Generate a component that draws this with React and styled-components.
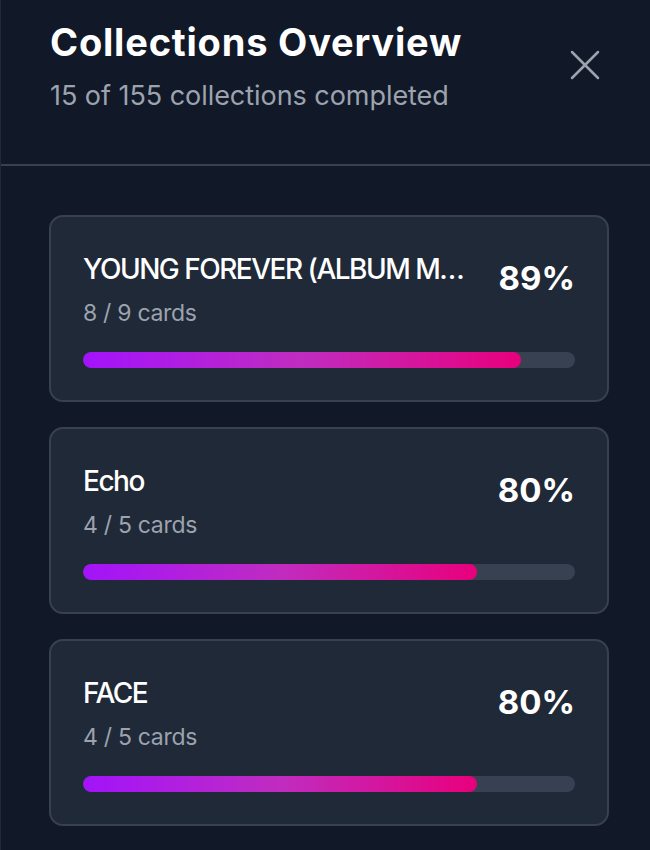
import React from 'react';
import styled, { createGlobalStyle } from 'styled-components';

const GlobalStyle = createGlobalStyle`
  html, body {
    margin: 0;
    padding: 0;
    background: #111827;
  }
  body {
    font-family: Inter, "Noto Sans", "Liberation Sans", sans-serif;
    -webkit-font-smoothing: antialiased;
  }
`;

const collections = [
  { name: 'YOUNG FOREVER (ALBUM MAKING PHOTOCARDS)', owned: 8, total: 9 },
  { name: 'Echo', owned: 4, total: 5 },
  { name: 'FACE', owned: 4, total: 5 },
];

// 패널 전체
const Panel = styled.div`
  width: 650px;
  height: 850px;
  background: #111827;
  border-left: 1px solid #1f2937;
  box-sizing: border-box;
  overflow: hidden;
`;

// 상단 헤더
const Header = styled.header`
  display: flex;
  justify-content: space-between;
  align-items: flex-start;
  padding: 18px 43px 0 49px;
  height: 166px;
  box-sizing: border-box;
  border-bottom: 2px solid #374151;
`;

const HeaderText = styled.div`
  display: flex;
  flex-direction: column;
`;

const Title = styled.h1`
  margin: 0;
  font-size: 38px;
  font-weight: 700;
  line-height: 48px;
  color: #ffffff;
  letter-spacing: 0.8px;
`;

const Subtitle = styled.p`
  margin: 10px 0 0;
  font-size: 27px;
  font-weight: 400;
  line-height: 40px;
  color: #9ca3af;
  letter-spacing: -0.05px;
`;

const CloseButton = styled.button`
  margin-top: 25px;
  width: 44px;
  height: 44px;
  padding: 0;
  border: none;
  background: transparent;
  display: flex;
  align-items: center;
  justify-content: center;
  color: #9ca3af;
  cursor: pointer;
`;

// 카드 목록
const List = styled.div`
  display: flex;
  flex-direction: column;
  gap: 25px;
  padding: 49px 41px 0 48px;
`;

const Card = styled.div`
  background: #1f2937;
  border: 2px solid #374151;
  border-radius: 14px;
  padding: 32px 32px 0 32px;
  height: 187px;
  box-sizing: border-box;
`;

const CardTop = styled.div`
  display: flex;
  justify-content: space-between;
  align-items: flex-start;
  gap: 20px;
`;

const CardText = styled.div`
  min-width: 0;
  flex: 1;
`;

const CardName = styled.div`
  font-size: 28px;
  font-weight: 500;
  line-height: 40px;
  color: #ffffff;
  white-space: nowrap;
  overflow: hidden;
  text-overflow: ellipsis;
  letter-spacing: -1.5px;
`;

const CardCount = styled.div`
  margin-top: 9px;
  font-size: 23px;
  line-height: 30px;
  color: #9ca3af;
  letter-spacing: -0.3px;
`;

const Percent = styled.div`
  font-size: 33px;
  font-weight: 700;
  line-height: 40px;
  margin-top: 9px;
  color: #ffffff;
  flex-shrink: 0;
`;

const Track = styled.div`
  margin-top: 24px;
  height: 16px;
  border-radius: 8px;
  background: #374151;
  overflow: hidden;
`;

const Fill = styled.div`
  height: 100%;
  border-radius: 8px;
  background: linear-gradient(90deg, #a213fb 0%, #c02cc0 50%, #e8007c 100%);
`;

const CloseIcon = () => (
  <svg width="32" height="32" viewBox="0 0 32 32" fill="none">
    <path d="M3 3 L29 29 M29 3 L3 29" stroke="currentColor" strokeWidth="2.5" strokeLinecap="round" />
  </svg>
);

const App = () => {
  const done = 15;
  const all = 155;
  return (
    <>
      <GlobalStyle />
      <Panel>
        <Header>
          <HeaderText>
            <Title>Collections Overview</Title>
            <Subtitle>{done} of {all} collections completed</Subtitle>
          </HeaderText>
          <CloseButton aria-label="Close">
            <CloseIcon />
          </CloseButton>
        </Header>
        <List>
          {collections.map((c) => {
            const pct = Math.round((c.owned / c.total) * 100);
            return (
              <Card key={c.name}>
                <CardTop>
                  <CardText>
                    <CardName>{c.name}</CardName>
                    <CardCount>{c.owned} / {c.total} cards</CardCount>
                  </CardText>
                  <Percent>{pct}%</Percent>
                </CardTop>
                <Track>
                  <Fill style={{ width: `${pct}%` }} />
                </Track>
              </Card>
            );
          })}
        </List>
      </Panel>
    </>
  );
};

export default App;
